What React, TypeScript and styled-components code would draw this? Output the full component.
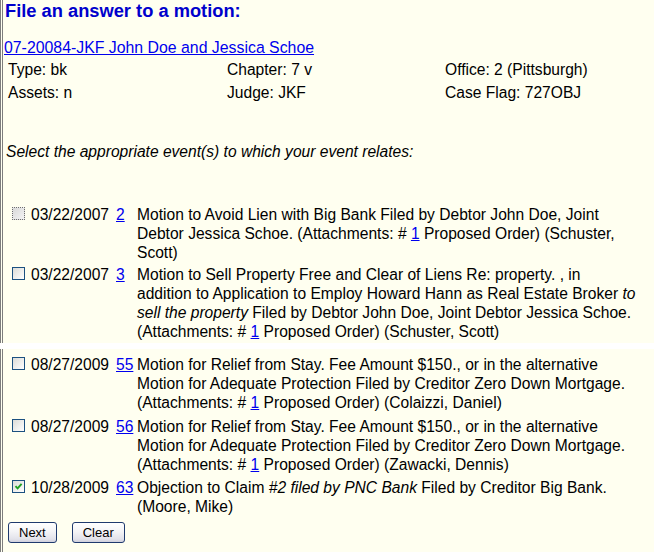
import React from 'react';
import styled, { createGlobalStyle } from 'styled-components';

const GlobalStyle = createGlobalStyle`
  html, body {
    margin: 0;
    padding: 0;
    background: #fffff0;
  }
  body {
    font-family: "Liberation Sans", Arial, sans-serif;
    color: #000;
  }
`;

const Page = styled.div`
  width: 654px;
  height: 552px;
  overflow: hidden;
  background: #fffff0;
  font-size: 15.6px;
`;

const Panel = styled.section<{ $height: number; $padTop?: number }>`
  box-sizing: border-box;
  height: ${p => p.$height}px;
  padding-top: ${p => p.$padTop || 0}px;
  border-left: 3px double #7d7d7d;
`;

// the white strip where the two captures were joined
const Seam = styled.div`
  height: 6px;
  background: #fff;
`;

const Title = styled.h1`
  margin: 0 0 0 2px;
  font-size: 18.3px;
  line-height: 22px;
  font-weight: bold;
  color: #0000cc;
`;

const CaseLink = styled.a`
  display: block;
  width: fit-content;
  margin: 16px 0 0 1px;
  font-size: 15.85px;
  line-height: 19px;
  color: #0000ee;
  text-decoration: underline;
`;

const InfoGrid = styled.div`
  display: grid;
  grid-template-columns: 219px 218px auto;
  grid-auto-rows: 23px;
  margin: 1px 0 0 5px;
  line-height: 23px;
`;

const Prompt = styled.p`
  margin: 38px 0 0 3px;
  line-height: 19px;
  font-style: italic;
`;

const EventList = styled.div<{ $gap: number; $top: number }>`
  display: flex;
  flex-direction: column;
  gap: ${p => p.$gap}px;
  margin-top: ${p => p.$top}px;
`;

const EventRow = styled.div`
  display: grid;
  grid-template-columns: 19px 85px 21px auto;
  align-items: start;
  margin-left: 9px;
  line-height: 19px;
`;

type CheckState = 'focus' | 'off' | 'on';

const Check = styled.span<{ $state: CheckState }>`
  box-sizing: border-box;
  display: flex;
  align-items: center;
  justify-content: center;
  width: 13px;
  height: 13px;
  margin-top: 2px;
  border: 1px ${p => (p.$state === 'focus' ? 'dotted #6f6f6f' : 'solid #1c5180')};
  background: ${p =>
    p.$state === 'focus'
      ? 'linear-gradient(135deg, #d9d9d9, #f4f4f4)'
      : 'linear-gradient(135deg, #dcdcd7, #ffffff)'};
`;

const EventDate = styled.span`
  white-space: nowrap;
`;

const DocLink = styled.a`
  color: #0000ee;
  text-decoration: underline;
`;

const Desc = styled.div`
  white-space: nowrap;
`;

const ButtonRow = styled.div`
  display: flex;
  gap: 15px;
  margin: 6px 0 0 5px;
`;

const Button = styled.button`
  box-sizing: border-box;
  height: 21px;
  padding: 0 10px;
  font-family: "Liberation Sans", Arial, sans-serif;
  font-size: 13px;
  color: #000;
  border: 1px solid #1f3a6e;
  border-radius: 3px;
  background: linear-gradient(#ffffff, #f4f4f6 45%, #e2e2ea 85%, #cfcfdc);
`;

const CheckMark = () => (
  <svg width="9" height="9" viewBox="0 0 9 9">
    <path d="M1.5 4.2 L3.6 6.4 L7.6 1.8" fill="none" stroke="#21a121" strokeWidth="1.9" />
  </svg>
);

const Att = ({ tail }: { tail: string }) => (
  <>
    (Attachments: # <DocLink href="#">1</DocLink> Proposed Order) {tail}
  </>
);

interface EventItem {
  state: CheckState;
  date: string;
  num: string;
  lines: React.ReactNode[];
}

const topEvents: EventItem[] = [
  {
    state: 'focus',
    date: '03/22/2007',
    num: '2',
    lines: [
      'Motion to Avoid Lien with Big Bank Filed by Debtor John Doe, Joint',
      <>Debtor Jessica Schoe. <Att tail="(Schuster," /></>,
      'Scott)',
    ],
  },
  {
    state: 'off',
    date: '03/22/2007',
    num: '3',
    lines: [
      'Motion to Sell Property Free and Clear of Liens Re: property. , in',
      <>addition to Application to Employ Howard Hann as Real Estate Broker <i>to</i></>,
      <><i>sell the property</i> Filed by Debtor John Doe, Joint Debtor Jessica Schoe.</>,
      <Att tail="(Schuster, Scott)" />,
    ],
  },
];

const bottomEvents: EventItem[] = [
  {
    state: 'off',
    date: '08/27/2009',
    num: '55',
    lines: [
      'Motion for Relief from Stay. Fee Amount $150., or in the alternative',
      'Motion for Adequate Protection Filed by Creditor Zero Down Mortgage.',
      <Att tail="(Colaizzi, Daniel)" />,
    ],
  },
  {
    state: 'off',
    date: '08/27/2009',
    num: '56',
    lines: [
      'Motion for Relief from Stay. Fee Amount $150., or in the alternative',
      'Motion for Adequate Protection Filed by Creditor Zero Down Mortgage.',
      <Att tail="(Zawacki, Dennis)" />,
    ],
  },
  {
    state: 'on',
    date: '10/28/2009',
    num: '63',
    lines: [
      <>Objection to Claim <i>#2 filed by PNC Bank</i> Filed by Creditor Big Bank.</>,
      '(Moore, Mike)',
    ],
  },
];

function EventLine({ item }: { item: EventItem }) {
  return (
    <EventRow>
      <Check $state={item.state}>{item.state === 'on' && <CheckMark />}</Check>
      <EventDate>{item.date}</EventDate>
      <span>
        <DocLink href="#">{item.num}</DocLink>
      </span>
      <Desc>
        {item.lines.map((line, i) => (
          <React.Fragment key={i}>
            {i > 0 && <br />}
            {line}
          </React.Fragment>
        ))}
      </Desc>
    </EventRow>
  );
}

export default function App() {
  return (
    <Page>
      <GlobalStyle />
      <Panel $height={343}>
        <Title>File an answer to a motion:</Title>
        <CaseLink href="#">07-20084-JKF John Doe and Jessica Schoe</CaseLink>
        <InfoGrid>
          <span>Type: bk</span>
          <span>Chapter: 7 v</span>
          <span>Office: 2 (Pittsburgh)</span>
          <span>Assets: n</span>
          <span>Judge: JKF</span>
          <span>Case Flag: 727OBJ</span>
        </InfoGrid>
        <Prompt>Select the appropriate event(s) to which your event relates:</Prompt>
        <EventList $gap={3} $top={44}>
          {topEvents.map((ev, i) => (
            <EventLine key={i} item={ev} />
          ))}
        </EventList>
      </Panel>
      <Seam />
      <Panel $height={203} $padTop={6}>
        <EventList $gap={4.5} $top={0}>
          {bottomEvents.map((ev, i) => (
            <EventLine key={i} item={ev} />
          ))}
        </EventList>
        <ButtonRow>
          <Button type="button">Next</Button>
          <Button type="button">Clear</Button>
        </ButtonRow>
      </Panel>
    </Page>
  );
}
